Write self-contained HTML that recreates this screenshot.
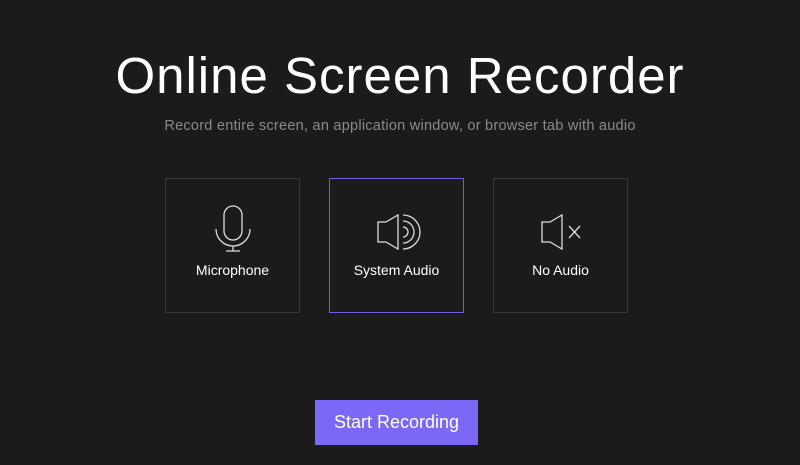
<!DOCTYPE html>
<html><head><style>
body{margin:0;width:800px;height:465px;background:#1c1b1c;font-family:"Liberation Sans",sans-serif;position:relative;overflow:hidden}
h1{position:absolute;top:46px;left:0;width:800px;text-align:center;margin:0;color:#fff;font-weight:400;font-size:51px;letter-spacing:1px}
.sub{position:absolute;top:118px;width:800px;text-align:center;color:#8a8a8a;font-size:14.5px;letter-spacing:0.25px}
.box{position:absolute;top:178px;width:133px;height:133px;border:1px solid #3a393a}
.box.sel{border-color:#6f5fe0}
.box svg{position:absolute;left:0;top:0}
.lbl{position:absolute;top:83px;width:100%;text-align:center;color:#fff;font-size:14px}
.btn{position:absolute;left:315px;top:400px;width:163px;height:45px;background:#7b68f5;color:#fff;font-size:18px;text-align:center;line-height:45px}
</style></head><body>
<h1>Online Screen Recorder</h1>
<div class="sub">Record entire screen, an application window, or browser tab with audio</div>
<div class="box" style="left:165px"><svg width="133" height="133" fill="none" stroke="#ddd" stroke-width="1.3">
<rect x="58" y="27" width="18" height="34" rx="9"/><path d="M50 50a17 17 0 0 0 34 0M67 67v5M60 72h14"/></svg>
<div class="lbl">Microphone</div></div>
<div class="box sel" style="left:329px"><svg width="133" height="133" fill="none" stroke="#ddd" stroke-width="1.3">
<path d="M48 43h8l12-7v34l-12-7h-8z"/><path d="M73 48a5 5 0 0 1 0 10M73 42a11 11 0 0 1 0 22M73 36a17 17 0 0 1 0 34"/></svg>
<div class="lbl">System Audio</div></div>
<div class="box" style="left:493px"><svg width="133" height="133" fill="none" stroke="#ddd" stroke-width="1.3">
<path d="M48 43h8l12-7v34l-12-7h-8z"/><path d="M75 47l11 12M86 47l-11 12"/></svg>
<div class="lbl">No Audio</div></div>
<div class="btn">Start Recording</div>
</body></html>
